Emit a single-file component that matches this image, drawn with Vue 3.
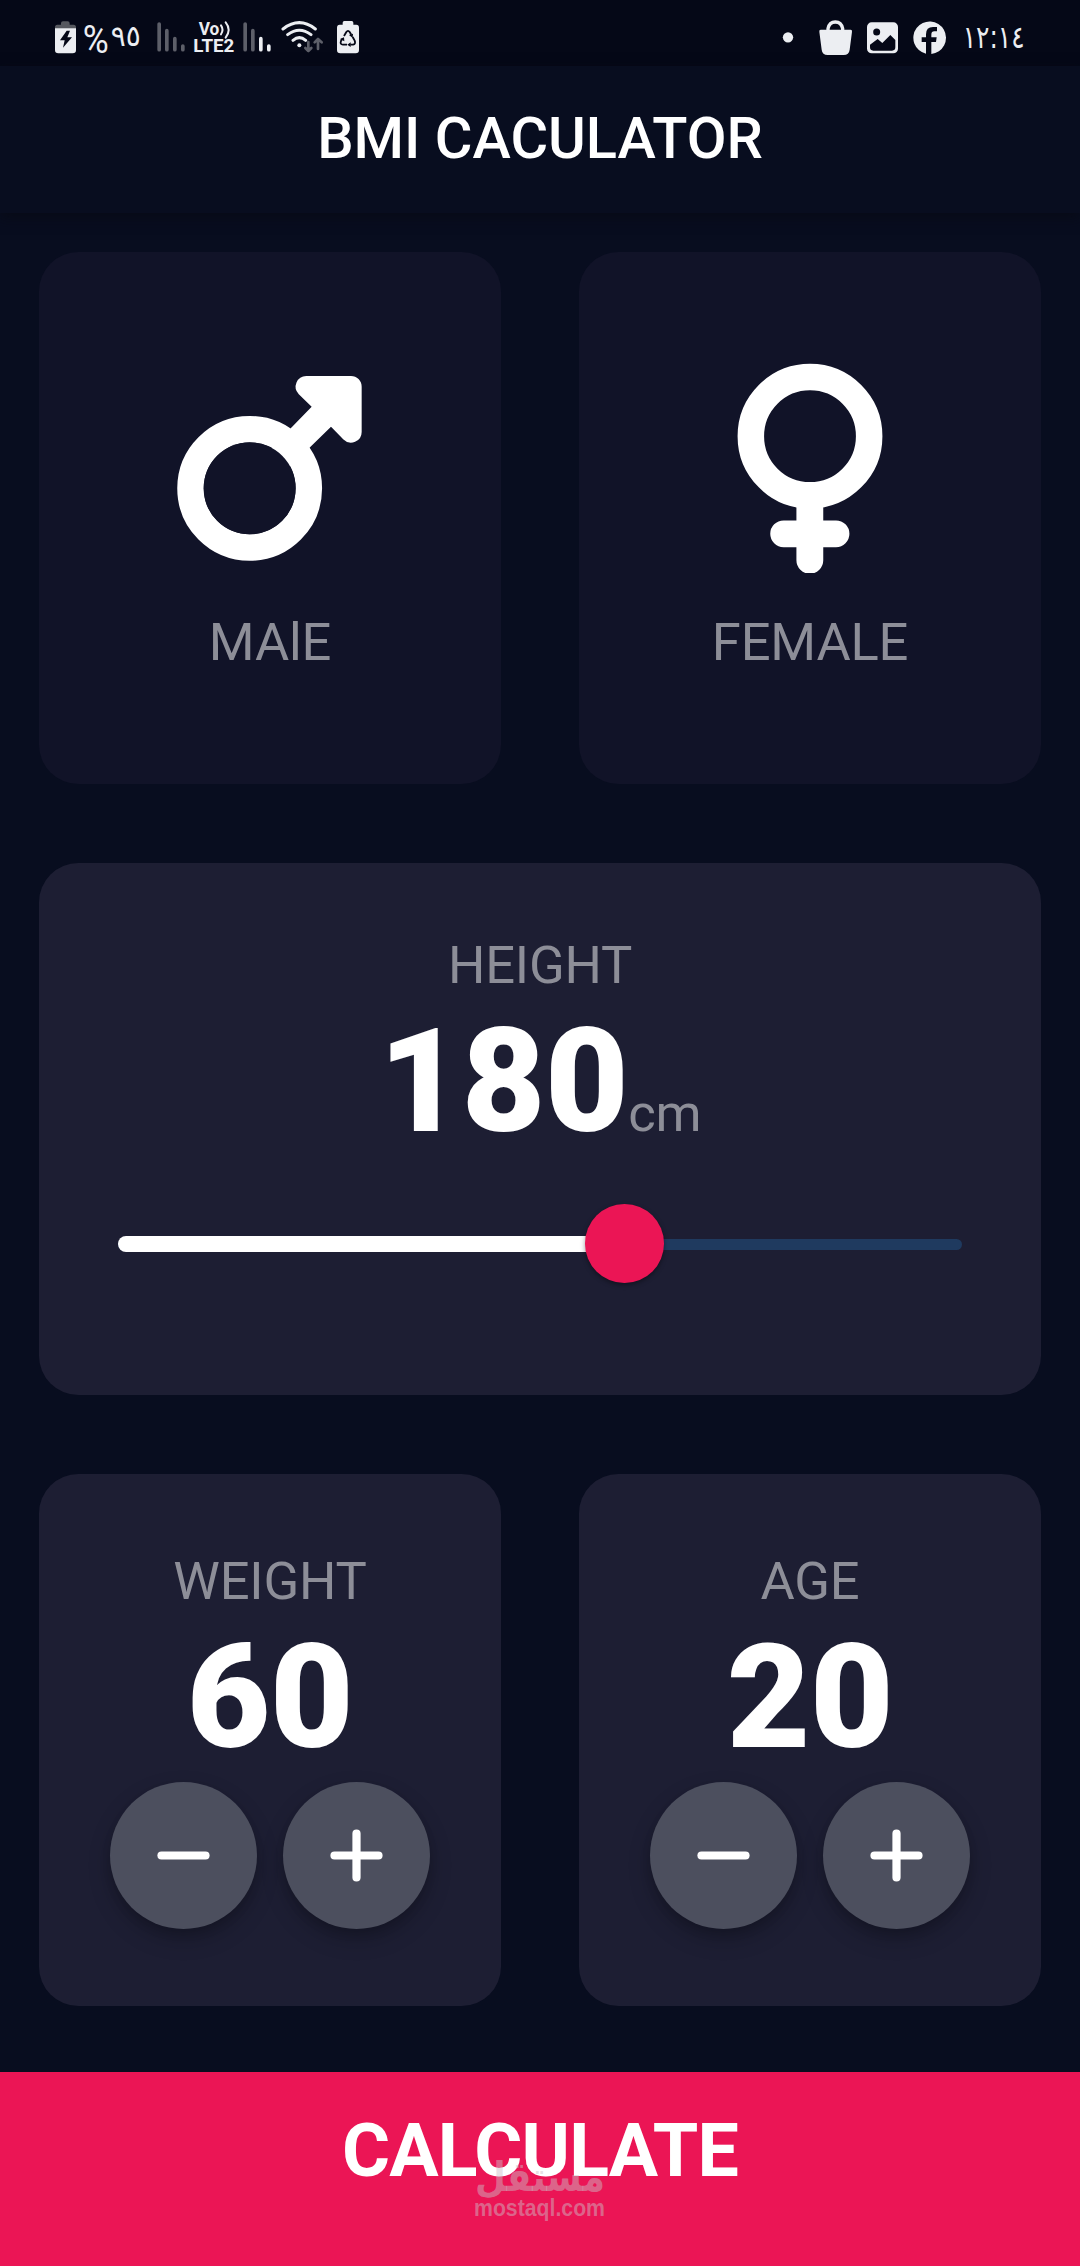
<script setup>
import { ref } from 'vue'

const height = ref(180)
const sliderFill = ref(60)
const counters = ref([
  { label: 'WEIGHT', value: 60 },
  { label: 'AGE', value: 20 },
])
</script>

<template>
  <div class="screen">
    <div class="status">
      <div class="status-left">
        <svg class="s-battery" viewBox="42 50 69 120">
          <path d="M63 69q0-6 6-6h14q6 0 6 6v4h12q7 0 7 8v4H45v-4q0-8 7-8h11z" fill="#56585f" />
          <path d="M45 84h63v65q0 10-10 10H55q-10 0-10-10z" fill="#eceef2" />
          <path d="M80 91L60 120h14l-5 22 27-31H82l8-20z" fill="#050817" />
        </svg>
        <svg class="s-pct" viewBox="126 50 180 120">
          <text x="128" y="158" textLength="78" lengthAdjust="spacingAndGlyphs" class="pct-sign">%</text>
          <text x="212" y="136" textLength="90" lengthAdjust="spacingAndGlyphs" class="pct-num">٩٥</text>
        </svg>
        <svg class="s-signal" viewBox="348 50 90 120">
          <g stroke="#5d5f69" stroke-width="11" stroke-linecap="round">
            <path d="M357.500 71v77M380.500 91v57M404.500 115v33M428.500 137v11" />
          </g>
        </svg>
        <svg class="s-volte" viewBox="459 50 126 120">
          <text x="476" y="104" textLength="62" lengthAdjust="spacingAndGlyphs" class="vo">Vo</text>
          <path d="M543 75q9 13 0 27M557 66q18 22 0 46" fill="none" stroke="#eceef2" stroke-width="6" stroke-linecap="round" />
          <text x="460" y="156" textLength="123" lengthAdjust="spacingAndGlyphs" class="lte">LTE2</text>
        </svg>
        <svg class="s-signal2" viewBox="606 50 90 120">
          <g stroke-width="11" stroke-linecap="round">
            <path d="M615.500 71v77M638.500 91v57" stroke="#5d5f69" />
            <path d="M662.500 115v33M686.500 137v11" stroke="#eceef2" />
          </g>
        </svg>
        <svg class="s-wifi" viewBox="722 50 129 120">
          <g fill="none" stroke="#eceef2" stroke-width="9" stroke-linecap="round">
            <path d="M728 86q49-38 97 0M742 103q35-27 70 0M758 120q19-16 38 0" />
          </g>
          <circle cx="777" cy="135" r="6" fill="#eceef2" />
          <g fill="none" stroke="#5d5f69" stroke-width="8" stroke-linecap="round" stroke-linejoin="round">
            <path d="M804 125v27M795 143l9 9 9-9M833 146v-29M823 126l10-10 11 10" />
          </g>
        </svg>
        <svg class="s-eco" viewBox="888 50 72 120">
          <path d="M908 67q0-5 5-5h22q5 0 5 5v6h9q8 0 8 9v67q0 10-10 10h-46q-10 0-10-10V82q0-9 8-9h9z" fill="#eceef2" />
          <g fill="none" stroke="#050817" stroke-width="5.500" stroke-linejoin="round">
            <path d="M912 107l7-12q5-7 10 0l5 8M938 110l6 11q4 10-5 12h-8M921 133h-12q-10-1-6-11l3-6" />
          </g>
          <path d="M927 104l12-4-1 13zM932 126v14l-10-7zM900 116l12-5 1 12z" fill="#050817" />
        </svg>
      </div>
      <div class="status-right">
        <svg class="s-apps" viewBox="126 50 495 120">
          <circle cx="144" cy="111" r="15.500" fill="#eceef2" />
          <path d="M264 90v-5q4-20 22-20t22 20v5" fill="none" stroke="#eceef2" stroke-width="10" />
          <path d="M242 88h90q5 0 4 6l-7 54q-2 16-18 16h-48q-16 0-18-16l-7-54q-1-6 4-6z" fill="#eceef2" />
          <rect x="381" y="66" width="93" height="93" rx="14" fill="#eceef2" />
          <circle cx="410" cy="95" r="10.500" fill="#050817" />
          <path d="M390 133l23-17 14 12 24-24 15 15v22q0 10-10 10h-56q-10 0-10-10z" fill="#050817" />
          <path d="M558 160v-35h-13v-14h13v-9q0-22 21-22h12v13h-8q-9 0-9 10v8h16l-2 14h-14v36a49 49 0 1 0-16-1z" fill="#eceef2" />
        </svg>
        <svg class="s-time" viewBox="666 50 192 120">
          <text x="668" y="143" textLength="186" lengthAdjust="spacingAndGlyphs" class="time">١٢:١٤</text>
        </svg>
      </div>
    </div>

    <header class="appbar"><h1>BMI CACULATOR</h1></header>

    <main class="body">
      <section class="row">
        <div class="card idle">
          <svg class="gender-icon" viewBox="46 69 630 630">
            <circle cx="300" cy="445" r="177.500" fill="none" stroke="#fff" stroke-width="79.500" />
            <path d="M424 264L486 200L447.400 162.600A32 32 0 0 1 470 108H604A32 32 0 0 1 636 140V276A32 32 0 0 1 581.400 298.600L544 260L481 322L420 380L360 330Z" fill="#fff" />
            <circle cx="300" cy="445" r="138" fill="#111328" />
          </svg>
          <div class="label">MAlE</div>
        </div>
        <div class="card idle">
          <svg class="gender-icon" viewBox="44 69 630 630">
            <circle cx="359" cy="288.500" r="177.500" fill="none" stroke="#fff" stroke-width="79.500" />
            <path d="M358.500 480V661M280 581.500H437" stroke="#fff" stroke-width="80.500" stroke-linecap="round" />
          </svg>
          <div class="label">FEMALE</div>
        </div>
      </section>

      <section class="row">
        <div class="card">
          <div class="label">HEIGHT</div>
          <div class="value-row"><span class="value">{{ height }}</span><span class="label">cm</span></div>
          <div class="slider">
            <div class="track"></div>
            <div class="fill" :style="{ width: sliderFill + '%' }"></div>
            <div class="thumb" :style="{ left: sliderFill + '%' }"></div>
          </div>
        </div>
      </section>

      <section class="row">
        <div v-for="c in counters" :key="c.label" class="card">
          <div class="label">{{ c.label }}</div>
          <div class="value">{{ c.value }}</div>
          <div class="buttons">
            <button class="round" @click="c.value--">
              <svg viewBox="0 0 147 147"><path d="M51.500 73.500h44" /></svg>
            </button>
            <button class="round" @click="c.value++">
              <svg viewBox="0 0 147 147"><path d="M51.500 73.500h44M73.500 51.500v44" /></svg>
            </button>
          </div>
        </div>
      </section>
    </main>

    <footer class="calculate">
      <span class="cta">CALCULATE</span>
      <svg class="watermark" viewBox="0 0 132 72">
        <text x="1" y="29" transform="scale(1 1.15)" direction="rtl" text-anchor="end" textLength="130" lengthAdjust="spacingAndGlyphs" class="wm-ar">مستقل</text>
        <text x="0" y="58" textLength="131" lengthAdjust="spacingAndGlyphs" class="wm-en">mostaql.com</text>
      </svg>
    </footer>
  </div>
</template>

<style>
body {
  background: #080d1f;
}
</style>

<style scoped>
.screen {
  width: 1080px;
  height: 2266px;
  display: flex;
  flex-direction: column;
  overflow: hidden;
  background: #080d1f;
  color: #fff;
  font-family: Roboto, "DejaVu Sans", sans-serif;
}
.status {
  height: 66px;
  flex: none;
  background: #050817;
  display: flex;
  justify-content: space-between;
  padding: 0 54px;
  box-sizing: border-box;
}
.status-left,
.status-right {
  display: flex;
  padding-top: 16.670px;
}
.status svg {
  display: block;
  height: 40px;
  flex: none;
}
.status text { fill: #eceef2; }
.s-battery { width: 23px; }
.s-pct { width: 60px; margin-left: 5px; }
.pct-sign { font: 400 114px Roboto, sans-serif; }
.pct-num { font: 400 88px "DejaVu Sans", sans-serif; }
.s-signal { width: 30px; margin-left: 14px; }
.s-volte { width: 42px; margin-left: 7px; }
.vo { font: 700 55px Roboto, sans-serif; }
.lte { font: 700 55px Roboto, sans-serif; }
.s-signal2 { width: 30px; margin-left: 7px; }
.s-wifi { width: 43px; margin-left: 9px; }
.s-eco { width: 24px; margin-left: 12px; }
.s-apps { width: 165px; }
.s-time { width: 64px; margin-left: 15px; }
.time { font: 400 94px "DejaVu Sans", sans-serif; }
.appbar {
  height: 147px;
  flex: none;
  background: #080d1f;
  display: flex;
  align-items: center;
  justify-content: center;
  box-shadow: 0 4px 12px rgba(8, 10, 20, 0.8);
}
h1 {
  margin: 0 0 4px;
  font-size: 57.750px;
  line-height: 68px;
  font-weight: 500;
}
.body {
  height: 1832.500px;
  flex: none;
  display: flex;
  flex-direction: column;
}
.row {
  flex: 1;
  display: flex;
}
.card {
  flex: 1;
  margin: 39.375px;
  border-radius: 39.375px;
  background: #1d1e33;
  display: flex;
  flex-direction: column;
  align-items: center;
  justify-content: center;
}
.idle { background: #111328; }
.gender-icon {
  width: 210px;
  height: 210px;
  display: block;
  margin-bottom: 39.375px;
}
.label {
  font-size: 52.500px;
  line-height: 61.500px;
  letter-spacing: -0.200px;
  color: #8d8e98;
}
.value {
  font-size: 144.375px;
  line-height: 169px;
  font-weight: 900;
  letter-spacing: -0.500px;
}
.value-row {
  display: flex;
  align-items: baseline;
}
.slider {
  position: relative;
  width: 843.750px;
  height: 157.500px;
  display: flex;
  align-items: center;
}
.track {
  width: 100%;
  height: 10.500px;
  border-radius: 6px;
  background: #1f3a5f;
}
.fill {
  position: absolute;
  left: 0;
  top: 70px;
  height: 16px;
  border-radius: 8px;
  background: #fff;
}
.thumb {
  position: absolute;
  top: 38.500px;
  width: 78.750px;
  height: 78.750px;
  margin-left: -39.375px;
  border-radius: 50%;
  background: #eb1555;
  box-shadow: 0 2px 5px rgba(0, 0, 0, 0.4);
}
.buttons {
  display: flex;
  gap: 26.250px;
}
.round {
  width: 147px;
  height: 147px;
  padding: 0;
  border: 0;
  border-radius: 50%;
  background: #4c4f5e;
  box-shadow: 0 10px 22px rgba(0, 0, 0, 0.22), 0 5px 8px rgba(0, 0, 0, 0.1);
}
.round svg {
  display: block;
  width: 147px;
  height: 147px;
  fill: none;
  stroke: #fff;
  stroke-width: 8.200px;
  stroke-linecap: round;
}
.calculate {
  position: relative;
  flex: 1;
  margin-top: 26.250px;
  background: #eb1555;
  display: flex;
  justify-content: center;
  padding-top: 36.500px;
}
.cta {
  font-size: 73.500px;
  line-height: 86px;
  font-weight: 700;
  letter-spacing: -0.850px;
}
.watermark {
  position: absolute;
  left: 474px;
  top: 86px;
  width: 132px;
  height: 72px;
  fill: rgba(205, 190, 200, 0.48);
}
.wm-ar { font: 700 36px "DejaVu Sans", sans-serif; }
.wm-en { font: 700 23px "Liberation Sans", sans-serif; }
</style>
